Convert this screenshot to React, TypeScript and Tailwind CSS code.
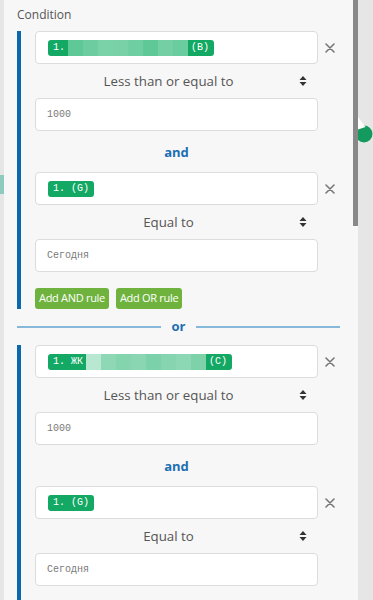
import React from 'react';

const sans = { fontFamily: '"Open Sans", "Liberation Sans", sans-serif' };
const mono = { fontFamily: '"Liberation Mono", "DejaVu Sans Mono", monospace' };

const CloseIcon = () => (
  <svg width="10" height="10" viewBox="0 0 10 10">
    <path d="M1 1 L9 9 M9 1 L1 9" stroke="#777" strokeWidth="1.6" strokeLinecap="round" />
  </svg>
);

const SortIcon = () => (
  <svg width="8" height="10" viewBox="0 0 8 10">
    <path d="M4 0 L7.5 4 L0.5 4 Z M4 10 L7.5 6 L0.5 6 Z" fill="#333" />
  </svg>
);

const Blur = ({ shades }: { shades: string[] }) => (
  <span className="flex h-[16px] mx-[3px]">
    {shades.map((c, i) => (
      <span key={i} className="h-full w-[15px]" style={{ backgroundColor: c }} />
    ))}
  </span>
);

const Chip = ({ children }: { children: React.ReactNode }) => (
  <span
    className="inline-flex items-center h-[16px] px-[5px] rounded-[3px] bg-[#13a864] text-white text-[10px] leading-[16px] whitespace-pre"
    style={mono}
  >
    {children}
  </span>
);

const FieldRow = ({ chip }: { chip: React.ReactNode }) => (
  <div className="flex items-center">
    <div className="flex-1 h-[33px] bg-white border border-[#dcdcdc] rounded-[4px] flex items-center pl-[12px]">
      {chip}
    </div>
    <div className="w-[24px] flex justify-center">
      <CloseIcon />
    </div>
  </div>
);

const OpSelect = ({ label }: { label: string }) => (
  <div className="mr-[24px] h-[34px] flex items-center relative">
    <div className="flex-1 text-center pr-[16px] pt-[1px] text-[13.3px] text-[#555]" style={sans}>
      {label}
    </div>
    <div className="absolute right-[11px] top-[12px]">
      <SortIcon />
    </div>
  </div>
);

const ValueInput = ({ value }: { value: string }) => (
  <div className="mr-[24px] h-[33px] bg-white border border-[#dcdcdc] rounded-[4px] flex items-center pl-[11px]">
    <span className="text-[10px] text-[#7a7a7a]" style={mono}>
      {value}
    </span>
  </div>
);

const AndLabel = () => (
  <div className="h-[41px] flex items-center justify-center mr-[24px] pt-[3px]">
    <span className="text-[13px] font-bold text-[#1d6fb4]" style={sans}>
      and
    </span>
  </div>
);

export default function App() {
  return (
    <div className="flex w-[373px] h-[600px] overflow-hidden bg-[#e6e6e6]">
      <div className="w-[4px] shrink-0 relative">
        <div className="absolute left-0 top-[175px] w-[4px] h-[19px] bg-[#8ecbbf]" />
      </div>

      <div className="w-[354px] shrink-0 bg-[#f7f7f7] relative pl-[13px] pr-[16px]">
        <div className="absolute right-0 top-0 w-[5px] h-[226px] bg-[#888]" />

        <div className="pt-[7px] h-[31px] text-[12px] leading-[16px] text-[#555]" style={sans}>
          Condition
        </div>

        <div className="border-l-4 border-[#0b68ae] pl-[14px]">
          <FieldRow
            chip={
              <Chip>
                1.
                <Blur shades={['#5ec896', '#6dcda1', '#7ad2a9', '#79d1a8', '#70cea3', '#5fc897', '#74cfa5', '#6acc9f']} />
                (B)
              </Chip>
            }
          />
          <OpSelect label="Less than or equal to" />
          <ValueInput value="1000" />
          <AndLabel />
          <FieldRow chip={<Chip>1. (G)</Chip>} />
          <OpSelect label="Equal to" />
          <ValueInput value="Сегодня" />
          <div className="flex gap-[7px] pt-[16px]">
            <button
              className="h-[21px] px-[4px] rounded-[3px] bg-[#6fb33e] text-white text-[11px] tracking-[-0.3px]"
              style={sans}
            >
              Add AND rule
            </button>
            <button
              className="h-[21px] px-[4px] rounded-[3px] bg-[#6fb33e] text-white text-[11px] tracking-[-0.3px]"
              style={sans}
            >
              Add OR rule
            </button>
          </div>
        </div>

        <div className="flex items-center h-[36px] mr-[2px]">
          <div className="flex-1 h-[2px] bg-[#86b8da]" />
          <span className="px-[11px] text-[13px] font-bold text-[#1d6fb4]" style={sans}>
            or
          </span>
          <div className="flex-1 h-[2px] bg-[#86b8da]" />
        </div>

        <div className="border-l-4 border-[#0b68ae] pl-[14px]">
          <FieldRow
            chip={
              <Chip>
                1. ЖК
                <Blur shades={['#b9e8d2', '#8fd8b6', '#84d4ae', '#8ad6b3', '#7bd1a9', '#86d5b0', '#8cd7b4', '#7dd2aa']} />
                (C)
              </Chip>
            }
          />
          <OpSelect label="Less than or equal to" />
          <ValueInput value="1000" />
          <AndLabel />
          <FieldRow chip={<Chip>1. (G)</Chip>} />
          <OpSelect label="Equal to" />
          <ValueInput value="Сегодня" />
          <div className="h-[20px]" />
        </div>
      </div>

      <div className="flex-1 relative">
        <svg className="absolute left-0 top-[117px]" width="15" height="26" viewBox="0 0 15 26">
          <circle cx="6" cy="17" r="8.5" fill="#14995f" />
          <path d="M0 0 L7.5 10 L0 12.5 Z" fill="#ffffff" />
        </svg>
      </div>
    </div>
  );
}
